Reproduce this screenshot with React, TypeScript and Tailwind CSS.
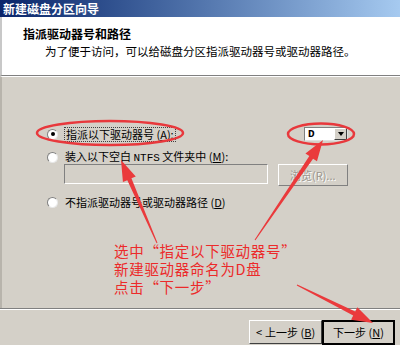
import React from 'react';

const cjk = '"Noto Sans CJK SC", "Noto Sans", sans-serif';

function arrowPoints(x1: number, y1: number, x2: number, y2: number, w0 = 1, w1 = 4.5, headLen = 21, headW = 14) {
  const dx = x2 - x1;
  const dy = y2 - y1;
  const len = Math.hypot(dx, dy);
  const ux = dx / len;
  const uy = dy / len;
  const nx = -uy;
  const ny = ux;
  const bx = x2 - ux * headLen;
  const by = y2 - uy * headLen;
  const pts = [
    [x1 + nx * w0 / 2, y1 + ny * w0 / 2],
    [bx + nx * w1 / 2, by + ny * w1 / 2],
    [bx + nx * headW / 2, by + ny * headW / 2],
    [x2, y2],
    [bx - nx * headW / 2, by - ny * headW / 2],
    [bx - nx * w1 / 2, by - ny * w1 / 2],
    [x1 - nx * w0 / 2, y1 - ny * w0 / 2],
  ];
  return pts.map((p) => p.join(',')).join(' ');
}

function Radio({ checked }: { checked?: boolean }) {
  return (
    <div className="w-[11px] h-[11px] shrink-0 rounded-full bg-white border border-t-[#808080] border-l-[#808080] border-r-[#e8e8e8] border-b-[#e8e8e8] flex items-center justify-center">
      {checked && <div className="w-[4px] h-[4px] rounded-full bg-black" />}
    </div>
  );
}

export default function App() {
  return (
    <div className="relative w-[400px] h-[345px] overflow-hidden bg-[#d4d0c8]" style={{ fontFamily: cjk }}>
      {/* title bar */}
      <div className="h-[17px] px-[3px] bg-gradient-to-r from-[#0a246a] to-[#a6caf0] text-white font-bold text-[12px] leading-[17px]">
        新建磁盘分区向导
      </div>

      {/* header */}
      <div className="h-[59px] bg-white border-l-2 border-[#c8c8c8] border-b border-b-[#808080] pt-[10px]">
        <div className="pl-[21px] text-[12px] font-bold leading-[14px] text-black">指派驱动器号和路径</div>
        <div className="pl-[43px] mt-[3px] text-[11.5px] leading-[14px] text-black">为了便于访问，可以给磁盘分区指派驱动器号或驱动器路径。</div>
      </div>

      {/* body */}
      <div className="flex flex-col pl-[45px] pr-[52px] border-t border-white border-l-2 border-l-[#b8b4ac] h-[232px]">
        <div className="mt-[48px] h-[18px] flex items-center">
          <Radio checked />
          <span className="ml-[6px] px-[1px] border border-dotted border-[#404040] text-[11px] leading-[13px] text-black">
            指派以下驱动器号 (<span className="underline">A</span>):
          </span>
          <div className="ml-auto w-[44px] h-[14px] bg-white border border-t-[#808080] border-l-[#808080] border-r-[#e0e0e0] border-b-[#e0e0e0] flex items-center">
            <span className="pl-[3px] text-[11px] leading-[12px] font-bold text-black" style={{ fontFamily: '"Liberation Mono", monospace' }}>D</span>
            <div className="ml-auto w-[13px] h-full bg-[#d4d0c8] border border-t-white border-l-white border-r-[#404040] border-b-[#404040] flex items-center justify-center">
              <div className="w-0 h-0 border-l-[3.5px] border-r-[3.5px] border-t-[4px] border-l-transparent border-r-transparent border-t-black" />
            </div>
          </div>
        </div>

        <div className="mt-[7px] h-[14px] flex items-center">
          <Radio />
          <span className="ml-[7px] text-[11px] leading-[13px] text-black">
            装入以下空白 <span style={{ fontFamily: '"Liberation Mono", monospace' }}>NTFS</span> 文件夹中 (<span className="underline">M</span>):
          </span>
        </div>

        <div className="h-[22px] flex items-start">
          <div className="ml-[17px] w-[205px] h-[20px] bg-[#d4d0c8] border border-t-[#808080] border-l-[#808080] border-r-white border-b-white" />
          <div className="ml-[10px] w-[71px] h-[22px] bg-[#d4d0c8] border border-t-white border-l-white border-r-[#808080] border-b-[#808080] flex items-center justify-center text-[11px] text-[#9a968e]" style={{ textShadow: '1px 1px 0 #ffffff' }}>
            浏览(R)...
          </div>
        </div>

        <div className="mt-[9px] h-[14px] flex items-center">
          <Radio />
          <span className="ml-[7px] text-[11px] leading-[13px] text-black">
            不指派驱动器号或驱动器路径 (<span className="underline">D</span>)
          </span>
        </div>

        <div className="mt-[33px] ml-[67px] text-[14.5px] leading-[18px] tracking-[0.7px] text-[#ec2a2a]">
          <div className="h-[18px]">选中“指定以下驱动器号”</div>
          <div className="h-[18px]">新建驱动器命名为D盘</div>
          <div className="h-[18px]">点击“下一步”</div>
        </div>
      </div>

      {/* separator */}
      <div className="h-[2px] border-t border-[#808080] border-b border-b-white" />

      {/* buttons */}
      <div className="mt-[10px] flex justify-end pr-[5px]">
        <div className="w-[73px] h-[24px] bg-[#d4d0c8] border border-t-white border-l-white border-r-[#404040] border-b-[#404040] flex items-center justify-center gap-[3px] text-[11px] text-black">
          <span>&lt;</span>
          <span>上一步 (<span className="underline">B</span>)</span>
        </div>
        <div className="w-[73px] h-[25px] border-2 border-black bg-[#d4d0c8] flex items-center justify-center text-[11px] text-black">
          下一步 (<span className="underline">N</span>)
        </div>
      </div>

      {/* annotations */}
      <svg className="absolute inset-0 pointer-events-none" width="400" height="345" viewBox="0 0 400 345">
        <ellipse cx="110" cy="133" rx="73" ry="12" fill="none" stroke="#e8383c" strokeWidth="2.5" />
        <ellipse cx="321" cy="134" rx="33" ry="10.5" fill="none" stroke="#e8383c" strokeWidth="2.5" />
        <polygon points={arrowPoints(157, 243, 121, 160)} fill="#ea3a3c" />
        <polygon points={arrowPoints(255, 240, 323, 140)} fill="#ea3a3c" />
        <polygon points={arrowPoints(297, 285, 373, 323)} fill="#ea3a3c" />
      </svg>
    </div>
  );
}
